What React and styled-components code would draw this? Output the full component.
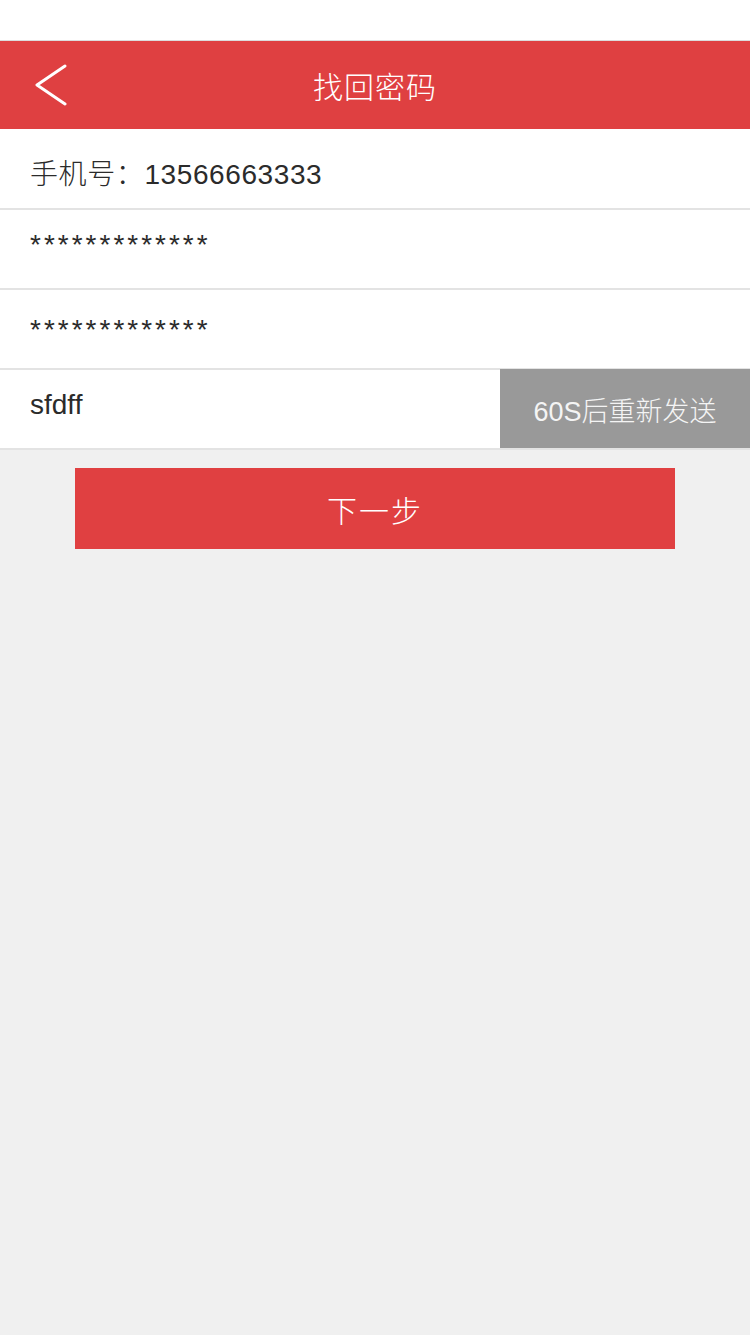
import React from "react";
import styled, { createGlobalStyle } from "styled-components";

const GlobalStyle = createGlobalStyle`
  html, body {
    margin: 0;
    padding: 0;
    background: #f0f0f0;
    font-family: "Liberation Sans", "Noto Sans CJK SC", sans-serif;
    font-weight: 300;
  }
  * { box-sizing: border-box; }
`;

const Page = styled.div`
  min-height: 1335px;
  background: #f0f0f0;
  display: flex;
  flex-direction: column;
`;

const StatusBar = styled.div`
  height: 41px;
  background: #ffffff;
  border-bottom: 1px solid #dcdcdc;
`;

const Header = styled.header`
  height: 88px;
  background: #df4041;
  display: grid;
  grid-template-columns: 100px 1fr 100px;
  align-items: center;
`;

const BackButton = styled.button`
  border: none;
  background: transparent;
  padding: 0 0 0 34px;
  height: 100%;
  display: flex;
  align-items: center;
  cursor: pointer;
`;

const Title = styled.h1`
  margin: 0;
  text-align: center;
  color: #ffffff;
  font-size: 30px;
  font-weight: 300;
  letter-spacing: 1px;
`;

const Form = styled.div`
  display: flex;
  flex-direction: column;
`;

const Row = styled.div`
  height: ${(p) => (p.$tall ? "81px" : "80px")};
  background: #ffffff;
  border-bottom: 2px solid #e3e3e3;
  display: flex;
  align-items: stretch;
`;

const Field = styled.div`
  flex: 1;
  display: flex;
  align-items: center;
  padding-left: 30px;
  padding-top: ${(p) => Math.max(0, (p.$offset || 0) * 2)}px;
  padding-bottom: ${(p) => Math.max(0, -(p.$offset || 0) * 2)}px;
  font-size: 28px;
  font-weight: 300;
  color: #2b2b2b;
  letter-spacing: ${(p) => p.$spacing || "0"};
`;

const CodeButton = styled.button`
  width: 250px;
  margin-top: -1px;
  border: none;
  background: #999999;
  color: #f4f4f4;
  font-family: inherit;
  font-weight: 300;
  font-size: 27px;
  padding: 2px 0 0;
  display: flex;
  align-items: center;
  justify-content: center;
`;

const NextButton = styled.button`
  margin: 18px 75px 0;
  height: 81px;
  border: none;
  background: #e04041;
  color: #ffffff;
  font-family: inherit;
  font-weight: 300;
  font-size: 30px;
  letter-spacing: 2px;
  display: flex;
  align-items: center;
  justify-content: center;
`;

export default function App() {
  return (
    <Page>
      <GlobalStyle />
      <StatusBar />
      <Header>
        <BackButton aria-label="返回">
          <svg width="34" height="42" viewBox="0 0 34 42">
            <polyline
              points="31,2 3,21 31,40"
              fill="none"
              stroke="#ffffff"
              strokeWidth="3"
              strokeLinecap="round"
              strokeLinejoin="round"
            />
          </svg>
        </BackButton>
        <Title>找回密码</Title>
        <div />
      </Header>
      <Form>
        <Row $tall>
          <Field $offset={3} $spacing="0.6px">手机号：13566663333</Field>
        </Row>
        <Row>
          <Field $offset={-4} $spacing="3px">*************</Field>
        </Row>
        <Row>
          <Field $offset={1} $spacing="3px">*************</Field>
        </Row>
        <Row>
          <Field $offset={-4}>sfdff</Field>
          <CodeButton>60S后重新发送</CodeButton>
        </Row>
      </Form>
      <NextButton>下一步</NextButton>
    </Page>
  );
}
